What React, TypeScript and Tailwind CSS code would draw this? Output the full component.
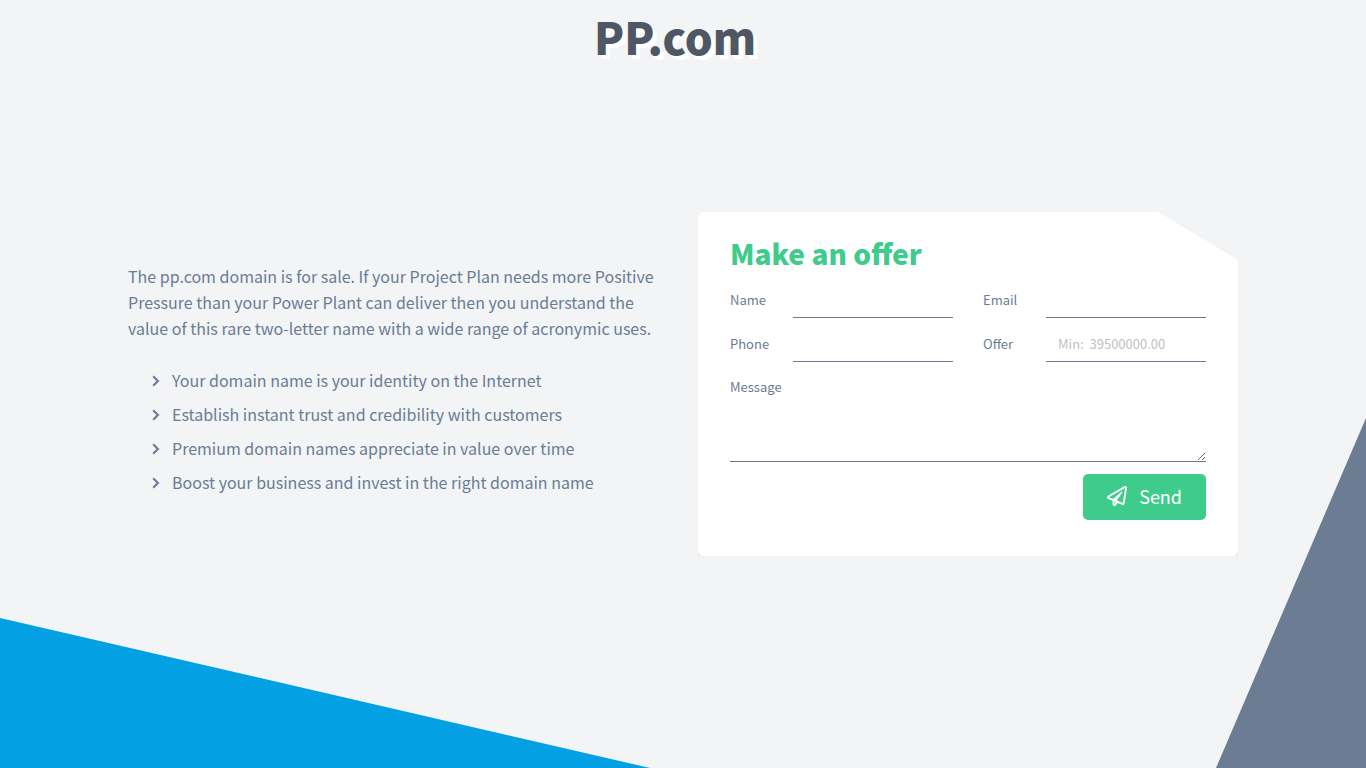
import { FaRegPaperPlane } from "react-icons/fa";

const benefits = [
  "Your domain name is your identity on the Internet",
  "Establish instant trust and credibility with customers",
  "Premium domain names appreciate in value over time",
  "Boost your business and invest in the right domain name",
];

const fields = [
  { id: "name", label: "Name", type: "text", placeholder: "" },
  { id: "email", label: "Email", type: "email", placeholder: "" },
  { id: "phone", label: "Phone", type: "tel", placeholder: "" },
  { id: "offer", label: "Offer", type: "text", placeholder: "Min:  39500000.00" },
];

function Backdrop() {
  return (
    <div aria-hidden="true" className="pointer-events-none absolute inset-0 -z-10 overflow-hidden">
      <svg className="absolute bottom-0 left-0 h-[150px] w-[650px]" viewBox="0 0 650 150">
        <path d="M0 0L650 150H0Z" fill="#03a0e4" />
      </svg>
      <svg className="absolute right-0 bottom-0 h-[350px] w-[150px]" viewBox="0 0 150 350">
        <path d="M150 0V350H0Z" fill="#6b7c93" />
      </svg>
    </div>
  );
}

function Chevron() {
  return (
    <svg aria-hidden="true" className="h-[14px] w-2 shrink-0" viewBox="0 0 8 14" fill="none">
      <path d="M1.2 3.3L5.9 8L1.2 12.7" stroke="currentColor" strokeWidth="2.1" />
    </svg>
  );
}

function Pitch() {
  return (
    <section className="mb-[10px] text-base leading-[26px]">
      <p>
        The pp.com domain is for sale. If your Project Plan needs more Positive Pressure than your
        Power Plant can deliver then you understand the value of this rare two-letter name with a
        wide range of acronymic uses.
      </p>
      <ul className="mt-[26px] flex flex-col gap-2 pl-6">
        {benefits.map((text) => (
          <li key={text} className="flex items-center gap-3">
            <Chevron />
            {text}
          </li>
        ))}
      </ul>
    </section>
  );
}

function OfferForm() {
  return (
    <form
      onSubmit={(e) => e.preventDefault()}
      className="rounded-[5px] bg-white px-8 pt-[22px] pb-9 text-[13px] shadow-md [clip-path:polygon(0_0,calc(100%-80px)_0,100%_48px,100%_100%,0_100%)]"
    >
      <h2 className="text-[28px] leading-[38px] font-black text-[#3ecb8b]">Make an offer</h2>
      <div className="mt-[10px] grid gap-x-[30px] gap-y-2 sm:grid-cols-2">
        {fields.map((field) => (
          <div key={field.id} className="flex">
            <label htmlFor={field.id} className="w-[63px] shrink-0 pt-2 leading-5">
              {field.label}
            </label>
            <input
              id={field.id}
              type={field.type}
              placeholder={field.placeholder}
              className="h-9 min-w-0 flex-1 border-b border-[#6b7c93] px-3 outline-none placeholder:text-[#bfbfbf]"
            />
          </div>
        ))}
      </div>
      <label htmlFor="message" className="mt-[15px] block leading-5">
        Message
      </label>
      <textarea
        id="message"
        className="block h-[65px] w-full resize border-b border-[#6b7c93] px-3 outline-none"
      />
      <button
        type="submit"
        className="mt-3 ml-auto flex h-[46px] items-center gap-3 rounded-[5px] bg-[#3ecb8b] px-6 pb-[2px] text-lg text-white"
      >
        <FaRegPaperPlane className="size-5" />
        Send
      </button>
    </form>
  );
}

export default function App() {
  return (
    <div className="relative isolate grid min-h-screen grid-rows-[1fr_auto_1fr] bg-[#f2f4f6] font-['Noto_Sans_CJK_SC',sans-serif] text-[#6b7c93]">
      <Backdrop />
      <header className="pr-4 text-center">
        <h1 className="pt-[6px] text-[44px] leading-[60px] font-black text-[#4e5763] [text-shadow:4px_4px_0_#fff]">
          PP.com
        </h1>
      </header>
      <main className="mx-auto grid w-full max-w-[1140px] items-center gap-[30px] px-[15px] lg:grid-cols-2">
        <Pitch />
        <OfferForm />
      </main>
    </div>
  );
}
